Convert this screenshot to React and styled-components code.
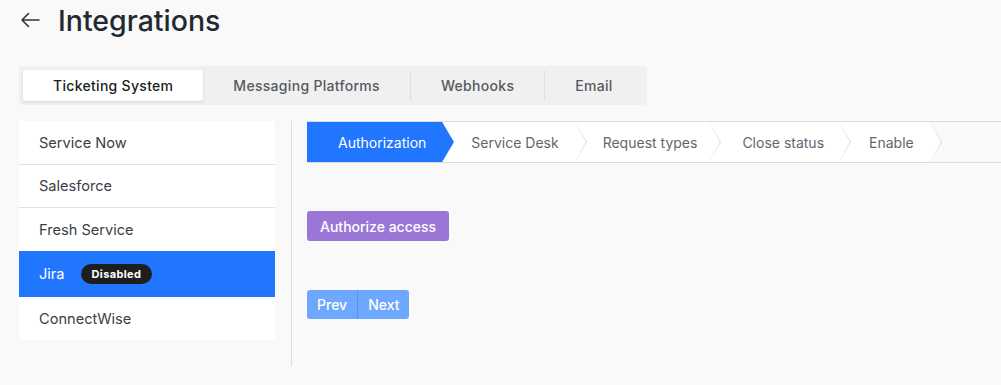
import React, { useState } from "react";
import styled, { createGlobalStyle, css } from "styled-components";

const GlobalStyle = createGlobalStyle`
  html, body {
    margin: 0;
    padding: 0;
    background: #f9f9f9;
    font-family: Inter, "Noto Sans", sans-serif;
    -webkit-font-smoothing: antialiased;
  }
  * { box-sizing: border-box; }
`;

const Page = styled.div`
  padding: 0 0 0 19px;
  min-height: 385px;
  background: #f9f9f9;
`;

const Header = styled.div`
  display: flex;
  align-items: center;
  height: 40px;
  gap: 18px;
`;

const BackButton = styled.button`
  display: flex;
  align-items: center;
  border: 0;
  padding: 0;
  margin-left: 1px;
  background: none;
  color: #333;
  cursor: pointer;
`;

const Title = styled.h1`
  margin: 0;
  font-size: 28.5px;
  font-weight: 500;
  color: #222a31;
`;

const Tabs = styled.div`
  display: flex;
  width: fit-content;
  margin-top: 26px;
  padding: 4px;
  background: #f0f0f0;
  border-radius: 4px;
`;

const Tab = styled.button`
  height: 31px;
  padding: 0 30px;
  border: 0;
  background: transparent;
  font-family: inherit;
  font-size: 14px;
  font-weight: 500;
  letter-spacing: 0.3px;
  color: #555a60;
  cursor: pointer;
  border-radius: 3px;
  ${(p) => p.$divider && css`
    border-left: 1px solid #dedede;
  `}
  ${(p) => p.$active && css`
    background: #fff;
    color: #1b1f23;
    box-shadow: 0 1px 3px rgba(0, 0, 0, 0.12);
  `}
`;

const Body = styled.div`
  display: flex;
  margin-top: 16px;
`;

const Sidebar = styled.ul`
  list-style: none;
  margin: 0;
  padding: 0;
  width: 256px;
  align-self: flex-start;
  background: #fff;
`;

const SidebarItem = styled.li`
  display: flex;
  align-items: center;
  gap: 16px;
  height: ${(p) => p.$height}px;
  padding: 0 20px;
  font-size: 14.6px;
  color: #3b4046;
  cursor: pointer;
  border-bottom: ${(p) => (p.$last || p.$active ? "0" : "1px solid #e1e1e1")};
  ${(p) => p.$active && css`
    background: #2176ff;
    color: #fff;
  `}
`;

const Badge = styled.span`
  display: inline-flex;
  align-items: center;
  height: 20px;
  padding: 0 11px;
  border-radius: 10px;
  background: #1e1e1e;
  color: #fff;
  font-size: 11px;
  font-weight: 700;
  letter-spacing: 0.35px;
`;

const Divider = styled.div`
  width: 1px;
  height: 245px;
  margin: 0 15px 0 16px;
  background: #dedede;
`;

const Content = styled.div`
  flex: 1;
  display: flex;
  flex-direction: column;
  align-items: flex-start;
`;

const Stepper = styled.div`
  display: flex;
  width: 100%;
  height: 42px;
  border-top: 1px solid #dcdcdc;
  border-bottom: 1px solid #dcdcdc;
`;

const Step = styled.div`
  position: relative;
  display: flex;
  align-items: center;
  height: 40px;
  padding: 0 ${(p) => p.$right}px 0 ${(p) => p.$left}px;
  font-size: 14px;
  color: #5f6670;
  background: #fff;
  white-space: nowrap;
  ${(p) => p.$active && css`
    background: #2176ff;
    color: #fff;
  `}
  &::before,
  &::after {
    content: "";
    position: absolute;
    top: 0;
    width: 0;
    height: 0;
    border-top: 20px solid transparent;
    border-bottom: 20px solid transparent;
  }
  &::before {
    right: -12px;
    z-index: 1;
    border-left: 12px solid ${(p) => (p.$active ? "#2176ff" : "#d8d8d8")};
  }
  &::after {
    right: -11px;
    z-index: 2;
    border-left: 11px solid ${(p) => (p.$active ? "#2176ff" : "#fff")};
  }
`;

const PrimaryButton = styled.button`
  height: 30px;
  margin-top: 48px;
  padding: 0 13px;
  border: 0;
  border-radius: 3px;
  background: #9a76d6;
  color: #fff;
  font-family: inherit;
  font-size: 14px;
  font-weight: 500;
  cursor: pointer;
`;

const Pager = styled.div`
  display: flex;
  margin-top: 49px;
  border-radius: 3px;
  overflow: hidden;
`;

const PagerButton = styled.button`
  height: 29px;
  padding: 0 10px;
  border: 0;
  background: #6ea8fe;
  color: #fff;
  font-family: inherit;
  font-size: 14px;
  font-weight: 500;
  cursor: pointer;
  & + & {
    border-left: 1px solid #4f94f7;
  }
`;

const tabs = ["Ticketing System", "Messaging Platforms", "Webhooks", "Email"];
const systems = [
  { name: "Service Now", h: 44 },
  { name: "Salesforce", h: 43 },
  { name: "Fresh Service", h: 43 },
  { name: "Jira", h: 46, badge: "Disabled" },
  { name: "ConnectWise", h: 43 },
];
const steps = [
  { label: "Authorization", left: 31, right: 16 },
  { label: "Service Desk", left: 29, right: 16 },
  { label: "Request types", left: 28, right: 12 },
  { label: "Close status", left: 33, right: 15 },
  { label: "Enable", left: 30, right: 16 },
];

export default function App() {
  const [tab, setTab] = useState(0);
  const [active, setActive] = useState(3);

  return (
    <Page>
      <GlobalStyle />
      <Header>
        <BackButton aria-label="Back">
          <svg width="20" height="16" viewBox="0 0 20 16" fill="none">
            <path d="M19 8H2M8.5 1.5L2 8l6.5 6.5" stroke="#333" strokeWidth="1.6" strokeLinecap="round" strokeLinejoin="round" />
          </svg>
        </BackButton>
        <Title>Integrations</Title>
      </Header>

      <Tabs>
        {tabs.map((t, i) => (
          <Tab
            key={t}
            $active={i === tab}
            $divider={i > 0 && i !== tab && i - 1 !== tab}
            onClick={() => setTab(i)}
          >
            {t}
          </Tab>
        ))}
      </Tabs>

      <Body>
        <Sidebar>
          {systems.map((s, i) => (
            <SidebarItem
              key={s.name}
              $height={s.h}
              $active={i === active}
              $last={i === systems.length - 1 || i + 1 === active}
              onClick={() => setActive(i)}
            >
              {s.name}
              {s.badge && <Badge>{s.badge}</Badge>}
            </SidebarItem>
          ))}
        </Sidebar>
        <Divider />
        <Content>
          <Stepper>
            {steps.map((s, i) => (
              <Step key={s.label} $active={i === 0} $left={s.left} $right={s.right}>
                {s.label}
              </Step>
            ))}
          </Stepper>
          <PrimaryButton>Authorize access</PrimaryButton>
          <Pager>
            <PagerButton>Prev</PagerButton>
            <PagerButton>Next</PagerButton>
          </Pager>
        </Content>
      </Body>
    </Page>
  );
}
